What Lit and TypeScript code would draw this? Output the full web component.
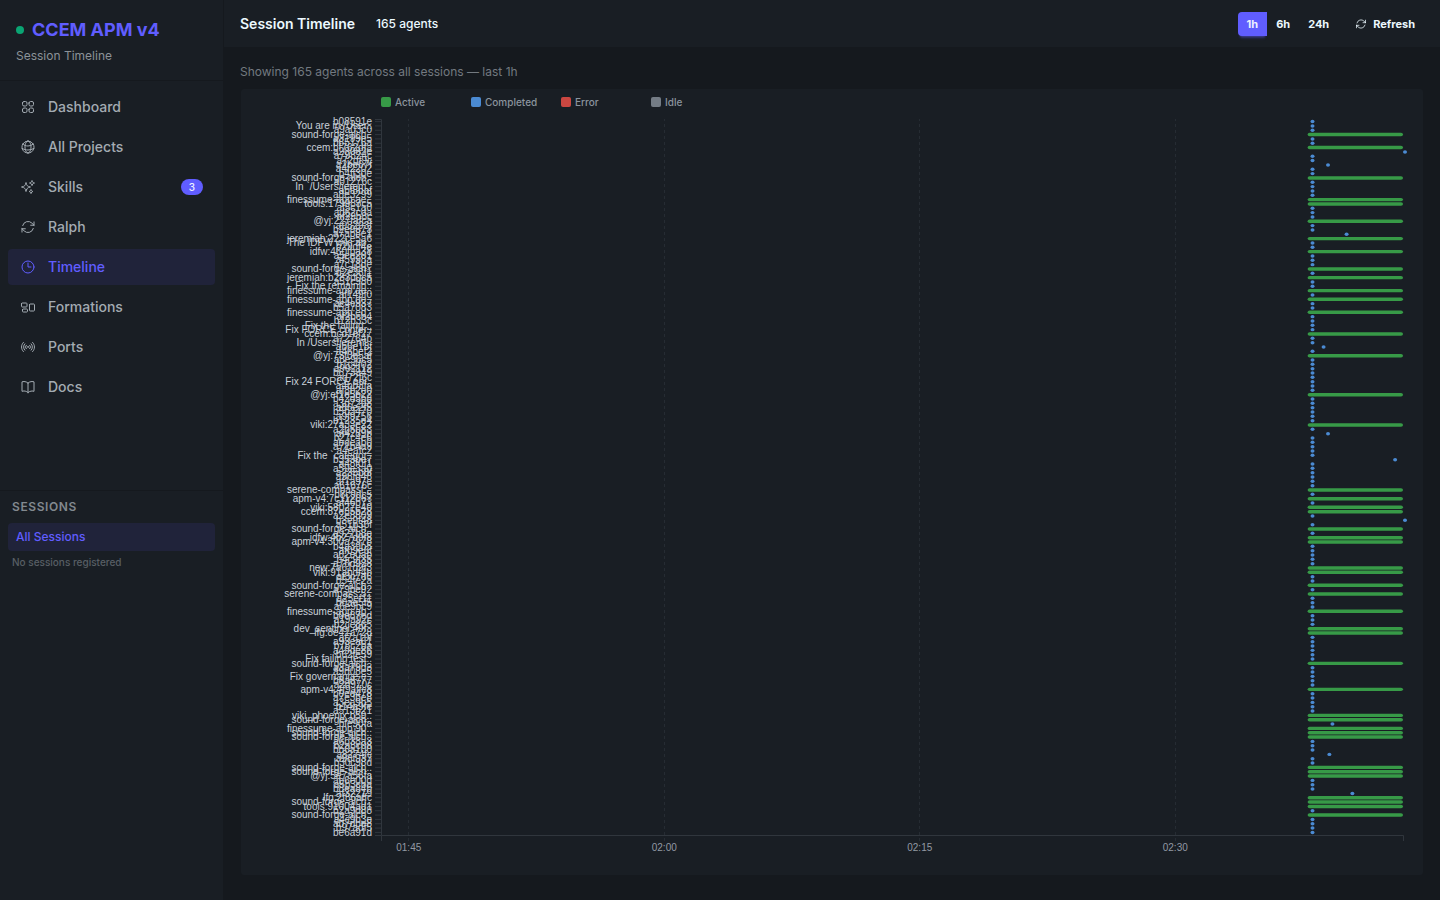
import { LitElement, html, svg, css } from "lit";
import { customElement, state, query } from "lit/decorators.js";
import { classMap } from "lit/directives/class-map.js";

type Kind = "active" | "completed" | "error" | "idle";

interface Agent {
  label: string;
  kind: Kind;
  start: number;
  end: number;
}

const ICONS: Record<string, string> = {
  dashboard:
    "M3.75 6A2.25 2.25 0 0 1 6 3.75h2.25A2.25 2.25 0 0 1 10.5 6v2.25a2.25 2.25 0 0 1-2.25 2.25H6a2.25 2.25 0 0 1-2.25-2.25V6ZM3.75 15.75A2.25 2.25 0 0 1 6 13.5h2.25a2.25 2.25 0 0 1 2.25 2.25V18a2.25 2.25 0 0 1-2.25 2.25H6A2.25 2.25 0 0 1 3.75 18v-2.25ZM13.5 6a2.25 2.25 0 0 1 2.25-2.25H18A2.25 2.25 0 0 1 20.25 6v2.25A2.25 2.25 0 0 1 18 10.5h-2.25a2.25 2.25 0 0 1-2.25-2.25V6ZM13.5 15.75a2.25 2.25 0 0 1 2.25-2.25H18a2.25 2.25 0 0 1 2.25 2.25V18A2.25 2.25 0 0 1 18 20.25h-2.25A2.25 2.25 0 0 1 13.5 18v-2.25Z",
  globe:
    "M12 21a9.004 9.004 0 0 0 8.716-6.747M12 21a9.004 9.004 0 0 1-8.716-6.747M12 21c2.485 0 4.5-4.03 4.5-9S14.485 3 12 3m0 18c-2.485 0-4.5-4.03-4.5-9S9.515 3 12 3m0 0a8.997 8.997 0 0 1 7.843 4.582M12 3a8.997 8.997 0 0 0-7.843 4.582m15.686 0A11.953 11.953 0 0 1 12 10.5c-2.998 0-5.74-1.1-7.843-2.918m15.686 0A8.959 8.959 0 0 1 21 12c0 .778-.099 1.533-.284 2.253m0 0A17.919 17.919 0 0 1 12 16.5c-3.162 0-6.133-.815-8.716-2.247m0 0A9.015 9.015 0 0 1 3 12c0-1.605.42-3.113 1.157-4.418",
  sparkles:
    "M9.813 15.904 9 18.75l-.813-2.846a4.5 4.5 0 0 0-3.09-3.09L2.25 12l2.846-.813a4.5 4.5 0 0 0 3.09-3.09L9 5.25l.813 2.846a4.5 4.5 0 0 0 3.09 3.09L15.75 12l-2.846.813a4.5 4.5 0 0 0-3.09 3.09ZM18.259 8.715 18 9.75l-.259-1.035a3.375 3.375 0 0 0-2.455-2.456L14.25 6l1.036-.259a3.375 3.375 0 0 0 2.455-2.456L18 2.25l.259 1.035a3.375 3.375 0 0 0 2.456 2.456L21.75 6l-1.035.259a3.375 3.375 0 0 0-2.456 2.456ZM16.894 20.567 16.5 21.75l-.394-1.183a2.25 2.25 0 0 0-1.423-1.423L13.5 18.75l1.183-.394a2.25 2.25 0 0 0 1.423-1.423l.394-1.183.394 1.183a2.25 2.25 0 0 0 1.423 1.423l1.183.394-1.183.394a2.25 2.25 0 0 0-1.423 1.423Z",
  refresh:
    "M16.023 9.348h4.992v-.001M2.985 19.644v-4.992m0 0h4.992m-4.993 0 3.181 3.183a8.25 8.25 0 0 0 13.803-3.7M4.031 9.865a8.25 8.25 0 0 1 13.803-3.7l3.181 3.182m0-4.991v4.99",
  clock: "M12 6v6h4.5m4.5 0a9 9 0 1 1-18 0 9 9 0 0 1 18 0Z",
  group:
    "M2.25 7.125C2.25 6.504 2.754 6 3.375 6h6c.621 0 1.125.504 1.125 1.125v3.75c0 .621-.504 1.125-1.125 1.125h-6a1.125 1.125 0 0 1-1.125-1.125v-3.75ZM14.25 8.625c0-.621.504-1.125 1.125-1.125h5.25c.621 0 1.125.504 1.125 1.125v8.25c0 .621-.504 1.125-1.125 1.125h-5.25a1.125 1.125 0 0 1-1.125-1.125v-8.25ZM3.75 16.125c0-.621.504-1.125 1.125-1.125h5.25c.621 0 1.125.504 1.125 1.125v2.25c0 .621-.504 1.125-1.125 1.125h-5.25a1.125 1.125 0 0 1-1.125-1.125v-2.25Z",
  signal:
    "M9.348 14.652a3.75 3.75 0 0 1 0-5.304m5.304 0a3.75 3.75 0 0 1 0 5.304m-7.425 2.121a6.75 6.75 0 0 1 0-9.546m9.546 0a6.75 6.75 0 0 1 0 9.546M5.106 18.894c-3.808-3.807-3.808-9.98 0-13.788m13.788 0c3.808 3.807 3.808 9.98 0 13.788M12 12h.008v.008H12V12Zm.375 0a.375.375 0 1 1-.75 0 .375.375 0 0 1 .75 0Z",
  book: "M12 6.042A8.967 8.967 0 0 0 6 3.75c-1.052 0-2.062.18-3 .512v14.25A8.987 8.987 0 0 1 6 18c2.305 0 4.408.867 6 2.292m0-14.25a8.966 8.966 0 0 1 6-2.292c1.052 0 2.062.18 3 .512v14.25A8.987 8.987 0 0 0 18 18a8.967 8.967 0 0 0-6 2.292m0-14.25v14.25",
};

const NAV = [
  { label: "Dashboard", icon: "dashboard" },
  { label: "All Projects", icon: "globe" },
  { label: "Skills", icon: "sparkles", badge: 3 },
  { label: "Ralph", icon: "refresh" },
  { label: "Timeline", icon: "clock" },
  { label: "Formations", icon: "group" },
  { label: "Ports", icon: "signal" },
  { label: "Docs", icon: "book" },
];

/* Sessions still running, by row. */
const ACTIVE: Record<number, string> = {
  3: "sound-forge-alch..", 6: "ccem:bf762dfa", 13: "sound-forge-alch..",
  18: "finessume-app:ae..", 19: "tools:179983c5", 23: "@yj:227fafca",
  27: "jeremiah:222ce5a6", 30: "idfw:460fba38", 34: "sound-forge-alch..",
  36: "jeremiah:b283d0c5", 39: "finessume-app:ae..", 41: "finessume-app:de..",
  44: "finessume-app:ed..", 49: "ccem:bcd1ef27", 54: "@yj:73f0e5af",
  63: "@yj:ef1e5b22", 70: "viki:27a33e22", 85: "serene-compassf:..",
  87: "apm-v4:7c112667", 89: "viki:58027e40", 90: "ccem:87e85b28",
  94: "sound-forge-alch..", 96: "idfw:4b27d9f8", 97: "apm-v4:300a7978",
  103: "new:7a61d9f3", 104: "viki:91abdf4b", 107: "sound-forge-alch..",
  109: "serene-compass:5..", 113: "finessume-app:ab..", 117: "dev_sentinel:49f..",
  118: "lfg:8e41a728", 125: "sound-forge-alch..", 131: "apm-v4:4f9affc8",
  137: "viki_phoenix:b59..", 138: "sound-forge-alch..", 140: "finessume-app:90..",
  141: "sound-forge-alch..", 142: "sound-forge-alch..", 149: "sound-forge-alch..",
  150: "sound-forge-alch..", 151: "@yj:5e7a56fa", 156: "lfg:2f86affc",
  157: "sound-forge-alch..", 158: "tools:91004ad1", 160: "sound-forge-alch..",
};

/* Finished agents named after their prompt. */
const PROMPTS: Record<number, string> = {
  1: "You are in /User..", 15: "In `/Users/jerem..", 28: "The IDFW wiki ap..",
  38: "Fix the remainin..", 47: "Fix the failing ..", 48: "Fix FORCE conter..",
  51: "In /Users/jeremi..", 60: "Fix 24 FORCE api..", 77: "Fix the `categor..",
  124: "Fix failing test..", 128: "Fix governance e..",
};

/* Finished agents known by their short id, in row order. */
const IDS = (
  "b08591e a9a03c0 a3199e5 b65176a a28082e a79824c a72df9c a2be67f a4f2202 b4ff30e a01276c " +
  "abf8baf a8e3299 af5c1a0 ad62cda af29b8c a98293f b2e9873 a7ab8e1 b29df4e a5ce201 af5998a " +
  "a7c18de b2e38f1 a51c980 af149f0 ac4c937 b5a7083 af2bcb4 b12b33c a72764b ab6e18f a46bef2 " +
  "a8e96c5 b1c4f02 a902112 b673949 ad72f6c a4bb3fa af8b2e0 b42d5b8 a3d7298 a86e2f5 b5b3470 " +
  "a9f9756 b1235e4 a2b5b83 af4289b b27c4e6 abdeab0 a71b4a9 a4eafc2 b353be7 a48f0f1 a59e3a0 " +
  "a235b8f a96fd48 af1a97e a61676c b3c9dc5 af46b73 a2e8809 b3e9f48 a51b36f a927b8e b4a39b5 " +
  "af09e6f a62e0ab b4c9f35 a76d928 af3c7d6 b54fe2a a79be92 a25ef11 b0ae5f5 a6e9bc9 b0e87ed " +
  "a19a92c b2ce865 af7a19f a93ea61 b78c2ba a49de86 b62fe59 a3a79d3 a9d08e5 b8a8777 a2d970c " +
  "b0ed478 a7e3be8 a3ea9b5 b14a9fe a513b21 bfe90fa a6b38a3 b2a8c08 bb6a100 a8274fc a98f937 " +
  "b30c98d ab6e00d a5b3cba b8ea84b af32219 b2a9d88 a4c9b3e ab7dbe8 b97adf5 ba4a36c b0a68af " +
  "a0e7b68 a4e9ac5 ab49836 b9a3363 be6a91d"
).split(" ");

/* Finished agents that ran outside the common start burst: row to minute. */
const LATE: Record<number, number> = {
  7: 60, 10: 55.48, 26: 56.57, 52: 55.22, 72: 55.48, 78: 59.42, 92: 60,
  139: 55.74, 146: 55.56, 155: 56.91,
};

const ROWS = 165;

const AGENTS: Agent[] = (() => {
  let next = 0;
  return Array.from({ length: ROWS }, (_, i): Agent => {
    if (ACTIVE[i]) return { label: ACTIVE[i], kind: "active", start: 54.4, end: 60 };
    const label = PROMPTS[i] ?? (i === ROWS - 1 ? IDS[IDS.length - 1] : IDS[next++ % IDS.length]);
    const start = LATE[i] ?? 54.57;
    return { label, kind: "completed", start, end: start };
  });
})();

const KINDS: Kind[] = ["active", "completed", "error", "idle"];
const TICKS = [
  { at: 1.6, label: "01:45" },
  { at: 16.6, label: "02:00" },
  { at: 31.6, label: "02:15" },
  { at: 46.6, label: "02:30" },
];
const SPAN = 60;
const MARGIN = { top: 30, right: 20, bottom: 40, left: 140 };

const icon = (name: string) => html`
  <svg class="icon" viewBox="0 0 24 24" aria-hidden="true"><path d=${ICONS[name]} /></svg>
`;

@customElement("timeline-chart")
export class TimelineChart extends LitElement {
  @state() private width = 1182;
  @state() private height = 786;
  @query(".frame") private frame!: HTMLElement;
  private observer?: ResizeObserver;

  static styles = css`
    :host { display: block; min-height: 0; }
    .frame { height: 100%; overflow: hidden; }
    svg { display: block; }
    .line { fill: none; stroke: #30363d; }
    .grid { stroke: #30363d; stroke-dasharray: 3 3; opacity: 0.6; }
    .axis { font: 10px "Liberation Sans", Arial, sans-serif; fill: #9299a3; }
    .name { font: 10px "Liberation Sans", Arial, sans-serif; fill: #c9d1d9; }
    .legend { font: 10px Inter, sans-serif; font-weight: 500; fill: #8b949e; }
    .bar { opacity: 0.8; }
    .swatch { opacity: 0.8; }
    .active { fill: #3fb950; }
    .completed { fill: #58a6ff; }
    .error { fill: #f85149; }
    .idle { fill: #8b949e; }
  `;

  firstUpdated() {
    this.observer = new ResizeObserver(([entry]) => {
      this.width = Math.round(entry.contentRect.width);
      this.height = Math.round(entry.contentRect.height);
    });
    this.observer.observe(this.frame);
  }

  disconnectedCallback() {
    super.disconnectedCallback();
    this.observer?.disconnect();
  }

  render() {
    const w = Math.max(0, this.width - MARGIN.left - MARGIN.right);
    const h = Math.max(0, this.height - MARGIN.top - MARGIN.bottom);
    const step = h / (ROWS + 0.2);
    const band = step * 0.8;
    const x = (minute: number) => (minute / SPAN) * w;
    const y = (row: number) => step * (row + 0.2);
    return html`
      <div class="frame">
        <svg width=${this.width} height=${this.height} role="img" aria-label="Agent timeline">
          <g transform="translate(${MARGIN.left},${MARGIN.top})">
            ${TICKS.map((t) => svg`
              <line class="grid" x1=${Math.round(x(t.at)) + 0.5} x2=${Math.round(x(t.at)) + 0.5} y1=${h + 6} y2="0" />
              <text class="axis" x=${x(t.at) + 0.5} y=${h + 16} text-anchor="middle">${t.label}</text>
            `)}
            <path class="line" d="M0.5,${h + 6}V${h + 0.5}H${w + 0.5}V${h + 6}" />
            <path class="line" d="M-6,0.5H0.5V${h + 0.5}H-6" />
            ${AGENTS.map((a, i) => svg`
              <line class="line" x1="-6" x2="0" y1=${y(i) + band / 2} y2=${y(i) + band / 2} />
              <text class="name" x="-9" y=${y(i) + band / 2} dy="0.32em" text-anchor="end">${a.label}</text>
            `)}
            ${AGENTS.map((a, i) => svg`
              <rect class="bar ${a.kind}" x=${x(a.start)} y=${y(i)} rx="2"
                width=${Math.max(4, x(a.end) - x(a.start))} height=${band} />
            `)}
            ${KINDS.map((k, i) => svg`
              <rect class="swatch ${k}" x=${i * 90} y="-22" width="10" height="10" rx="2" />
              <text class="legend" x=${i * 90 + 14} y="-13">${k[0].toUpperCase() + k.slice(1)}</text>
            `)}
          </g>
        </svg>
      </div>
    `;
  }
}

@customElement("app-root")
export class AppRoot extends LitElement {
  @state() private range = "1h";

  static styles = css`
    :host {
      display: flex;
      height: 100vh;
      overflow: hidden;
      background: #15191e;
      color: #ecf9ff;
      font: 14px/20px Inter, sans-serif;
    }
    * { box-sizing: border-box; }
    a { color: inherit; text-decoration: none; }
    h1, h2, p, ul { margin: 0; padding: 0; }
    ul { list-style: none; }
    button { font: inherit; color: inherit; background: none; border: 0; cursor: pointer; }
    .icon {
      width: 16px; height: 16px; flex: none;
      fill: none; stroke: currentColor; stroke-width: 1.5;
      stroke-linecap: round; stroke-linejoin: round;
    }
    .sidebar {
      width: 224px; flex: none;
      display: flex; flex-direction: column;
      background: #191e24;
      border-right: 1px solid #15191e;
    }
    .brand { padding: 16px; border-bottom: 1px solid #15191e; }
    .brand h1 {
      display: flex; align-items: center; gap: 8px;
      font-size: 18px; line-height: 28px; font-weight: 700; color: #605dff;
    }
    .dot { width: 8px; height: 8px; border-radius: 50%; background: #0aa573; }
    .muted { font-size: 12px; line-height: 16px; }
    .brand .muted { color: #8b9298; padding-top: 4px; }
    .nav { flex: 1 1 0; min-height: 0; padding: 8px; overflow: hidden; }
    .nav ul { display: grid; gap: 4px; }
    .item {
      display: flex; align-items: center; gap: 12px;
      padding: 8px 12px; border-radius: 4px;
      color: #a3abb2; font-weight: 500;
    }
    .current { background: #20233a; color: #605dff; font-weight: 500; }
    .count {
      margin-left: auto; padding: 0 8px; border-radius: 8px;
      background: #605dff; color: #edf1fe;
      font-size: 10px; line-height: 16px; font-weight: 500;
    }
    .sessions { flex: 1 1 0; min-height: 0; border-top: 1px solid #15191e; padding: 8px; }
    .sessions h2 {
      padding: 0 4px 8px; font-size: 12px; line-height: 16px; font-weight: 600;
      letter-spacing: 0.6px; color: #82898f;
    }
    .session { display: block; padding: 6px 8px; border-radius: 4px; font-size: 12px; line-height: 16px; }
    .none { padding: 4px; font-size: 10px; line-height: 14px; font-weight: 500; color: #585e65; }
    .main { flex: 1; min-width: 0; display: flex; flex-direction: column; }
    .top {
      display: flex; align-items: center; gap: 12px;
      height: 48px; padding: 0 16px;
      background: #191e24; border-bottom: 1px solid #15191e;
    }
    .top h2 { font-size: 14px; font-weight: 600; }
    .badge { padding: 0 9px; font-size: 12px; font-weight: 500; }
    .tools { margin-left: auto; display: flex; align-items: center; gap: 8px; }
    .join { display: flex; }
    .tools button {
      display: flex; align-items: center; gap: 6px;
      height: 24px; padding: 0 9px;
      font-size: 11px; font-weight: 700;
    }
    .tools .on {
      background: #605dff; color: #edf1fe;
      border-radius: 4px 0 0 4px;
      box-shadow: 0 3px 2px -2px #605dff4d, 0 4px 3px -2px #605dff4d;
    }
    .tools .icon { width: 12px; height: 12px; }
    .body { flex: 1; min-height: 0; display: flex; flex-direction: column; gap: 8px; padding: 16px 16px 24px; }
    .body .muted { color: #737980; }
    .card {
      flex: 1; min-height: 0;
      background: #191e24; border: 1px solid #15191e; border-radius: 4px;
    }
  `;

  render() {
    return html`
      <aside class="sidebar">
        <header class="brand">
          <h1><span class="dot"></span>CCEM APM v4</h1>
          <p class="muted">Session Timeline</p>
        </header>
        <nav class="nav">
          <ul>
            ${NAV.map((n) => html`
              <li>
                <a href="#" class=${classMap({ item: true, current: n.label === "Timeline" })}>
                  ${icon(n.icon)}${n.label}
                  ${n.badge ? html`<span class="count">${n.badge}</span>` : null}
                </a>
              </li>
            `)}
          </ul>
        </nav>
        <section class="sessions">
          <h2>SESSIONS</h2>
          <a href="#" class="session current">All Sessions</a>
          <p class="none">No sessions registered</p>
        </section>
      </aside>
      <main class="main">
        <header class="top">
          <h2>Session Timeline</h2>
          <span class="badge">165 agents</span>
          <div class="tools">
            <div class="join">
              ${["1h", "6h", "24h"].map((r) => html`
                <button type="button" class=${classMap({ on: this.range === r })}
                  @click=${() => (this.range = r)}>${r}</button>
              `)}
            </div>
            <button type="button">${icon("refresh")}Refresh</button>
          </div>
        </header>
        <div class="body">
          <p class="muted">Showing 165 agents across all sessions — last ${this.range}</p>
          <timeline-chart class="card"></timeline-chart>
        </div>
      </main>
    `;
  }
}
